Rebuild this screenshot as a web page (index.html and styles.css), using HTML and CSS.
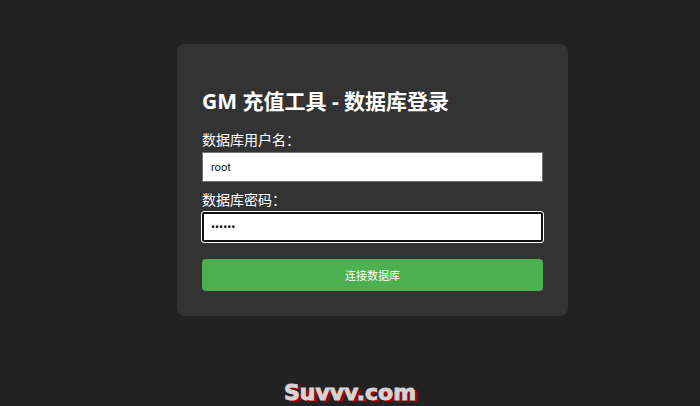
FILE: index.html
```html
<!DOCTYPE html>
<html lang="zh-CN">
<head>
  <meta charset="UTF-8" />
  <meta name="viewport" content="width=device-width, initial-scale=1.0"/>
  <title>GM 充值工具 - 数据库登录</title>
  <link rel="stylesheet" href="styles.css">
</head>
<body>

  <main class="page">
    <form class="login-box" onsubmit="return false">
      <h2>GM 充值工具 - 数据库登录</h2>

      <label for="dbUser">数据库用户名：</label>
      <input type="text" id="dbUser" value="root" autocomplete="off" />

      <label for="dbPass">数据库密码：</label>
      <input type="password" id="dbPass" class="active" value="123456" autocomplete="off" />

      <button type="submit">连接数据库</button>
    </form>
  </main>

  <footer class="site-mark">Suvvv.com</footer>

</body>
</html>
```

FILE: styles.css
```css
* {
  box-sizing: border-box;
}

body {
  margin: 0;
  min-height: 100vh;
  display: flex;
  flex-direction: column;
  background-color: #222;
  color: #fff;
  font-family: "Noto Sans", "Noto Sans CJK SC", sans-serif;
}

.page {
  flex: 1;
  padding: 44px 0 0 45px;
}

.login-box {
  max-width: 391px;
  margin: 0 auto;
  padding: 25px;
  background-color: #333;
  border-radius: 8px;
}

h2 {
  margin: 18px 0 13px;
  font-size: 21px;
  line-height: 28px;
}

label {
  display: block;
  font-size: 14px;
  line-height: 24px;
}

input {
  display: block;
  width: 100%;
  height: 30px;
  margin: 0 0 6px;
  padding: 0 8px;
  border: 1px solid #767676;
  background-color: #fff;
  color: #111;
  font-family: Roboto, "Liberation Sans", sans-serif;
  font-size: 11px;
}

input.active {
  padding: 0 7px;
  border: 2px solid #101010;
  border-radius: 2px;
  outline: 1px solid #fff;
  font-size: 12px;
}

button {
  display: block;
  width: 100%;
  height: 32px;
  margin-top: 17px;
  border: none;
  border-radius: 4px;
  background-color: #4caf50;
  color: #fff;
  font-family: "Liberation Sans", "Noto Sans CJK SC", sans-serif;
  font-size: 11px;
  cursor: pointer;
}

.site-mark {
  text-align: center;
  font-family: "DejaVu Sans", sans-serif;
  font-size: 22px;
  font-weight: bold;
  line-height: 26px;
  color: #d4d4d4;
  -webkit-text-stroke: 1px #d4d4d4;
  text-shadow: 3px 2px 0 #a00000;
}
```
